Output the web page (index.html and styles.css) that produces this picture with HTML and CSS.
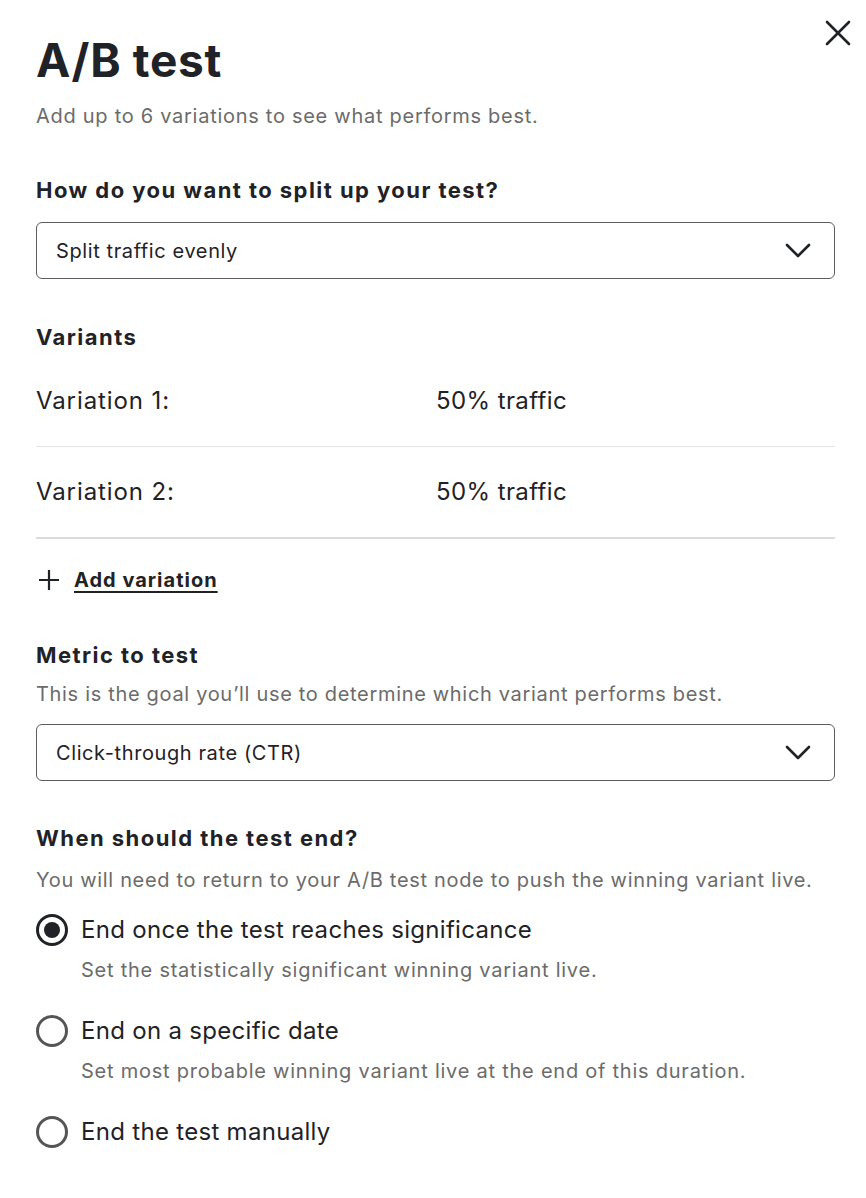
FILE: index.html
```html
<!DOCTYPE html>
<html lang="en">
<head>
<meta charset="utf-8">
<title>A/B test</title>
<link rel="stylesheet" href="styles.css">
</head>
<body>
<div class="panel">
  <button class="close" aria-label="Close">
    <svg width="26" height="26" viewBox="0 0 26 26"><path d="M2 2 L24 24 M24 2 L2 24" stroke="#1f2226" stroke-width="2.6" stroke-linecap="round" fill="none"/></svg>
  </button>

  <h1 class="title">A/B test</h1>
  <p class="subtitle">Add up to 6 variations to see what performs best.</p>

  <h2 class="section-heading split-heading">How do you want to split up your test?</h2>
  <div class="select">
    <span class="select-value">Split traffic evenly</span>
    <svg class="chevron" width="26" height="18" viewBox="0 0 26 18"><path d="M2 3 L13 14 L24 3" stroke="#1f2226" stroke-width="2.6" stroke-linecap="round" stroke-linejoin="round" fill="none"/></svg>
  </div>

  <h2 class="section-heading variants-heading">Variants</h2>
  <div class="variants">
    <div class="variant-row">
      <span class="variant-name">Variation 1:</span>
      <span class="variant-traffic">50% traffic</span>
    </div>
    <div class="variant-row last">
      <span class="variant-name">Variation 2:</span>
      <span class="variant-traffic">50% traffic</span>
    </div>
  </div>

  <div class="add-variation">
    <svg class="plus" width="22" height="22" viewBox="0 0 22 22"><path d="M11 1 V21 M1 11 H21" stroke="#1f2226" stroke-width="2.2" fill="none"/></svg>
    <a class="add-link" href="#">Add variation</a>
  </div>

  <h2 class="section-heading metric-heading">Metric to test</h2>
  <p class="hint metric-hint">This is the goal you’ll use to determine which variant performs best.</p>
  <div class="select">
    <span class="select-value">Click-through rate (CTR)</span>
    <svg class="chevron" width="26" height="18" viewBox="0 0 26 18"><path d="M2 3 L13 14 L24 3" stroke="#1f2226" stroke-width="2.6" stroke-linecap="round" stroke-linejoin="round" fill="none"/></svg>
  </div>

  <h2 class="section-heading end-heading">When should the test end?</h2>
  <p class="hint end-hint">You will need to return to your A/B test node to push the winning variant live.</p>

  <div class="radios">
    <div class="radio-option">
      <div class="radio-line">
        <span class="radio checked"></span>
        <span class="radio-label">End once the test reaches significance</span>
      </div>
      <p class="radio-desc">Set the statistically significant winning variant live.</p>
    </div>
    <div class="radio-option">
      <div class="radio-line">
        <span class="radio"></span>
        <span class="radio-label">End on a specific date</span>
      </div>
      <p class="radio-desc">Set most probable winning variant live at the end of this duration.</p>
    </div>
    <div class="radio-option">
      <div class="radio-line">
        <span class="radio"></span>
        <span class="radio-label">End the test manually</span>
      </div>
    </div>
  </div>
</div>
</body>
</html>
```

FILE: styles.css
```css
* { box-sizing: border-box; }

html, body {
  margin: 0;
  padding: 0;
  background: #ffffff;
}

body {
  font-family: Inter, "Noto Sans", "Liberation Sans", sans-serif;
  color: #1f2226;
}

.panel {
  position: relative;
  padding: 33px 31px 40px 36px;
}

.close {
  position: absolute;
  top: 20px;
  right: 15px;
  width: 26px;
  height: 26px;
  padding: 0;
  border: 0;
  background: none;
  display: flex;
}

.title {
  margin: 0;
  font-size: 46px;
  line-height: 55px;
  font-weight: 700;
  letter-spacing: 0.7px;
}

.subtitle {
  margin: 14px 0 0;
  font-size: 20px;
  line-height: 28px;
  color: #6b6b6b;
  letter-spacing: 0.72px;
}

.section-heading {
  margin: 0;
  font-size: 22px;
  line-height: 30px;
  font-weight: 700;
  letter-spacing: 1.45px;
}

.split-heading { margin-top: 45px; }
.variants-heading { margin-top: 43px; }
.metric-heading { margin-top: 46px; }
.end-heading { margin-top: 42px; }

.select {
  margin-top: 17px;
  height: 57px;
  border: 1px solid #5c5c5c;
  border-radius: 6px;
  display: flex;
  align-items: center;
  justify-content: space-between;
  padding: 0 23px 0 19px;
}

.select-value {
  font-size: 20px;
  line-height: 28px;
  letter-spacing: 0.6px;
}

.chevron { display: block; }

.variants { margin-top: 4px; }

.variant-row {
  display: grid;
  grid-template-columns: 400px 1fr;
  padding: 29px 0;
  border-bottom: 1px solid #e3e3e3;
  font-size: 24px;
  line-height: 32px;
  letter-spacing: 0.4px;
}

.variant-name { letter-spacing: 0.9px; }

.variant-row.last {
  border-bottom: 2px solid #dcdcdc;
}

.add-variation {
  margin-top: 27px;
  display: flex;
  align-items: center;
  gap: 14px;
  padding-left: 2px;
}

.plus { display: block; }

.add-link {
  color: #1f2226;
  font-size: 20px;
  line-height: 28px;
  font-weight: 700;
  letter-spacing: 1px;
  text-decoration: underline;
  text-decoration-thickness: 2px;
  text-underline-offset: 4px;
}

.hint {
  margin: 0;
  font-size: 20px;
  line-height: 28px;
  color: #6b6b6b;
  letter-spacing: 0.68px;
}

.metric-hint { margin-top: 10px; }
.metric-hint + .select { margin-top: 16px; }
.end-hint { margin-top: 13px; }

.radios {
  margin-top: 20px;
  display: flex;
  flex-direction: column;
  gap: 31px;
}

.radio-line {
  display: flex;
  align-items: center;
  gap: 13px;
}

.radio {
  width: 32px;
  height: 32px;
  border-radius: 50%;
  border: 3px solid #555555;
  flex: none;
  display: flex;
  align-items: center;
  justify-content: center;
}

.radio.checked {
  border-color: #1f2226;
}

.radio.checked::after {
  content: "";
  width: 16px;
  height: 16px;
  border-radius: 50%;
  background: #1f2226;
}

.radio-label {
  font-size: 24px;
  line-height: 32px;
  letter-spacing: 0.3px;
}

.radio-desc {
  margin: 10px 0 0 45px;
  font-size: 20px;
  line-height: 28px;
  color: #6b6b6b;
  letter-spacing: 0.76px;
}
```
